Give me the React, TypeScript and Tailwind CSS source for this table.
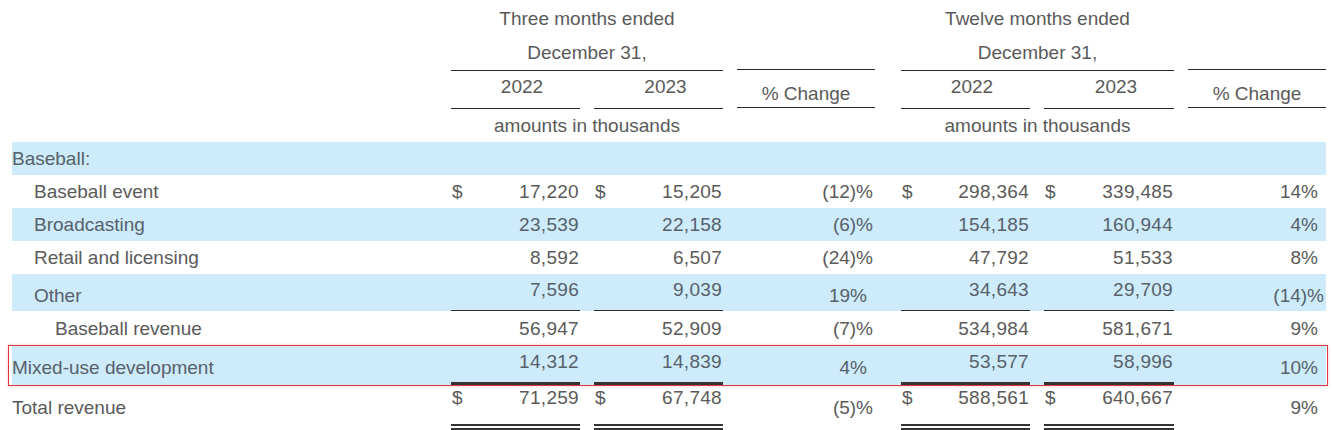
type Cell = { sign?: boolean; value: string };

type Row = {
  label: string;
  indent: 0 | 1 | 2;
  blue?: boolean;
  h: string;
  cells?: [Cell, Cell, string, Cell, Cell, string];
  line?: "single" | "thick" | "double";
  numPad?: string;
  pctPad?: string;
  labelPad?: string;
  boxed?: boolean;
};

const rows: Row[] = [
  { label: "Baseball:", indent: 0, blue: true, h: "h-[33px]" },
  {
    label: "Baseball event",
    indent: 1,
    h: "h-[33px]",
    cells: [
      { sign: true, value: "17,220" },
      { sign: true, value: "15,205" },
      "(12)%",
      { sign: true, value: "298,364" },
      { sign: true, value: "339,485" },
      "14%",
    ],
  },
  {
    label: "Broadcasting",
    indent: 1,
    blue: true,
    h: "h-[33px]",
    cells: [{ value: "23,539" }, { value: "22,158" }, "(6)%", { value: "154,185" }, { value: "160,944" }, "4%"],
  },
  {
    label: "Retail and licensing",
    indent: 1,
    h: "h-[33px]",
    cells: [{ value: "8,592" }, { value: "6,507" }, "(24)%", { value: "47,792" }, { value: "51,533" }, "8%"],
  },
  {
    label: "Other",
    indent: 1,
    blue: true,
    h: "h-[37px]",
    line: "single",
    numPad: "pb-[6px]",
    pctPad: "pt-[6px]",
    labelPad: "pt-[5px]",
    cells: [{ value: "7,596" }, { value: "9,039" }, "19%", { value: "34,643" }, { value: "29,709" }, "(14)%"],
  },
  {
    label: "Baseball revenue",
    indent: 2,
    h: "h-[34px]",
    cells: [{ value: "56,947" }, { value: "52,909" }, "(7)%", { value: "534,984" }, { value: "581,671" }, "9%"],
  },
  {
    label: "Mixed-use development",
    indent: 0,
    blue: true,
    h: "h-[40px]",
    line: "thick",
    numPad: "pb-[5px]",
    pctPad: "pt-[5px]",
    labelPad: "pt-[4px]",
    boxed: true,
    cells: [{ value: "14,312" }, { value: "14,839" }, "4%", { value: "53,577" }, { value: "58,996" }, "10%"],
  },
  {
    label: "Total revenue",
    indent: 0,
    h: "h-[45px]",
    line: "double",
    numPad: "pb-[14px]",
    pctPad: "pb-[1px]",
    labelPad: "pb-[1px]",
    cells: [
      { sign: true, value: "71,259" },
      { sign: true, value: "67,748" },
      "(5)%",
      { sign: true, value: "588,561" },
      { sign: true, value: "640,667" },
      "9%",
    ],
  },
];

const indentClass = ["pl-0", "pl-[22px]", "pl-[43px]"];

function lineClass(line?: Row["line"]) {
  if (line === "single") return "border-b-[1.5px] border-[#2a2a2a]";
  if (line === "thick") return "border-b-[3px] border-[#333]";
  if (line === "double") return "border-b-[6px] border-double border-[#333]";
  return "";
}

function NumCell({ cell, width, ml, row }: { cell: Cell; width: string; ml: string; row: Row }) {
  return (
    <div className={`${width} ${ml} flex h-full self-stretch items-center justify-between pl-[1px] pr-[1px] ${row.numPad ?? ""} ${lineClass(row.line)}`}>
      <span>{cell.sign ? "$" : ""}</span>
      <span className="tracking-[0.3px]">{cell.value}</span>
    </div>
  );
}

function PctCell({ value, ml, row }: { value: string; ml: string; row: Row }) {
  const pos = !value.startsWith("(");
  return (
    <div className={`w-[138px] ${ml} flex h-full items-center justify-end ${pos ? "pr-[8px]" : "pr-[2px]"} ${row.pctPad ?? ""}`}>
      {value}
    </div>
  );
}

function DataRow({ row }: { row: Row }) {
  return (
    <div className={`relative flex w-[1314px] ${row.h} ${row.blue ? "bg-[#cdebfa] text-[#56616b]" : "text-[#5a5a5a]"}`}>
      <div className={`flex h-full w-[439px] items-center ${indentClass[row.indent]} ${row.labelPad ?? ""}`}>{row.label}</div>
      {row.cells && (
        <>
          <NumCell cell={row.cells[0]} width="w-[129px]" ml="ml-0" row={row} />
          <NumCell cell={row.cells[1]} width="w-[129px]" ml="ml-[14px]" row={row} />
          <PctCell value={row.cells[2]} ml="ml-[14px]" row={row} />
          <NumCell cell={row.cells[3]} width="w-[129px]" ml="ml-[26px]" row={row} />
          <NumCell cell={row.cells[4]} width="w-[130px]" ml="ml-[14px]" row={row} />
          <PctCell value={row.cells[5]} ml="ml-[14px]" row={row} />
        </>
      )}
      {row.boxed && (
        <div className="pointer-events-none absolute -left-[4px] -right-[2px] top-0 -bottom-[1px] border-[1.5px] border-[#e0383f] shadow-[0_0_3px_rgba(224,56,63,0.3)]" />
      )}
    </div>
  );
}

function PeriodHeader({ title, ml, secondWidth }: { title: string; ml: string; secondWidth: string }) {
  return (
    <div className={`flex ${ml}`}>
      <div className="flex flex-col">
        <div className="flex h-[36px] items-center justify-center">{title}</div>
        <div className="flex h-[35px] items-center justify-center border-b border-[#2a2a2a] pb-[2px]">December 31,</div>
        <div className="flex h-[38px] gap-[14px]">
          <div className="flex w-[129px] items-center justify-center border-b-[1.5px] border-[#2a2a2a] pb-[6px] pl-[13px]">2022</div>
          <div className={`flex ${secondWidth} items-center justify-center border-b-[1.5px] border-[#2a2a2a] pb-[6px] pl-[14px]`}>2023</div>
        </div>
        <div className="flex h-[33px] items-center justify-center pb-[1px]">amounts in thousands</div>
      </div>
      <div className="ml-[14px] flex w-[138px] flex-col">
        <div className="h-[70px] border-b border-[#2a2a2a]" />
        <div className="flex h-[38px] items-end justify-center border-b-[1.5px] border-[#2a2a2a] pb-[4px]">% Change</div>
      </div>
    </div>
  );
}

export default function App() {
  return (
    <div className="h-[430px] w-[1332px] overflow-hidden bg-white text-[19px] leading-none text-[#5a5a5a] [font-family:'Liberation_Sans',Arial,sans-serif]">
      <div className="ml-[12px] flex">
        <div className="w-[439px]" />
        <PeriodHeader title="Three months ended" ml="ml-0" secondWidth="w-[129px]" />
        <PeriodHeader title="Twelve months ended" ml="ml-[26px]" secondWidth="w-[130px]" />
      </div>
      <div className="ml-[12px] flex flex-col">
        {rows.map((r) => (
          <DataRow key={r.label} row={r} />
        ))}
      </div>
    </div>
  );
}
